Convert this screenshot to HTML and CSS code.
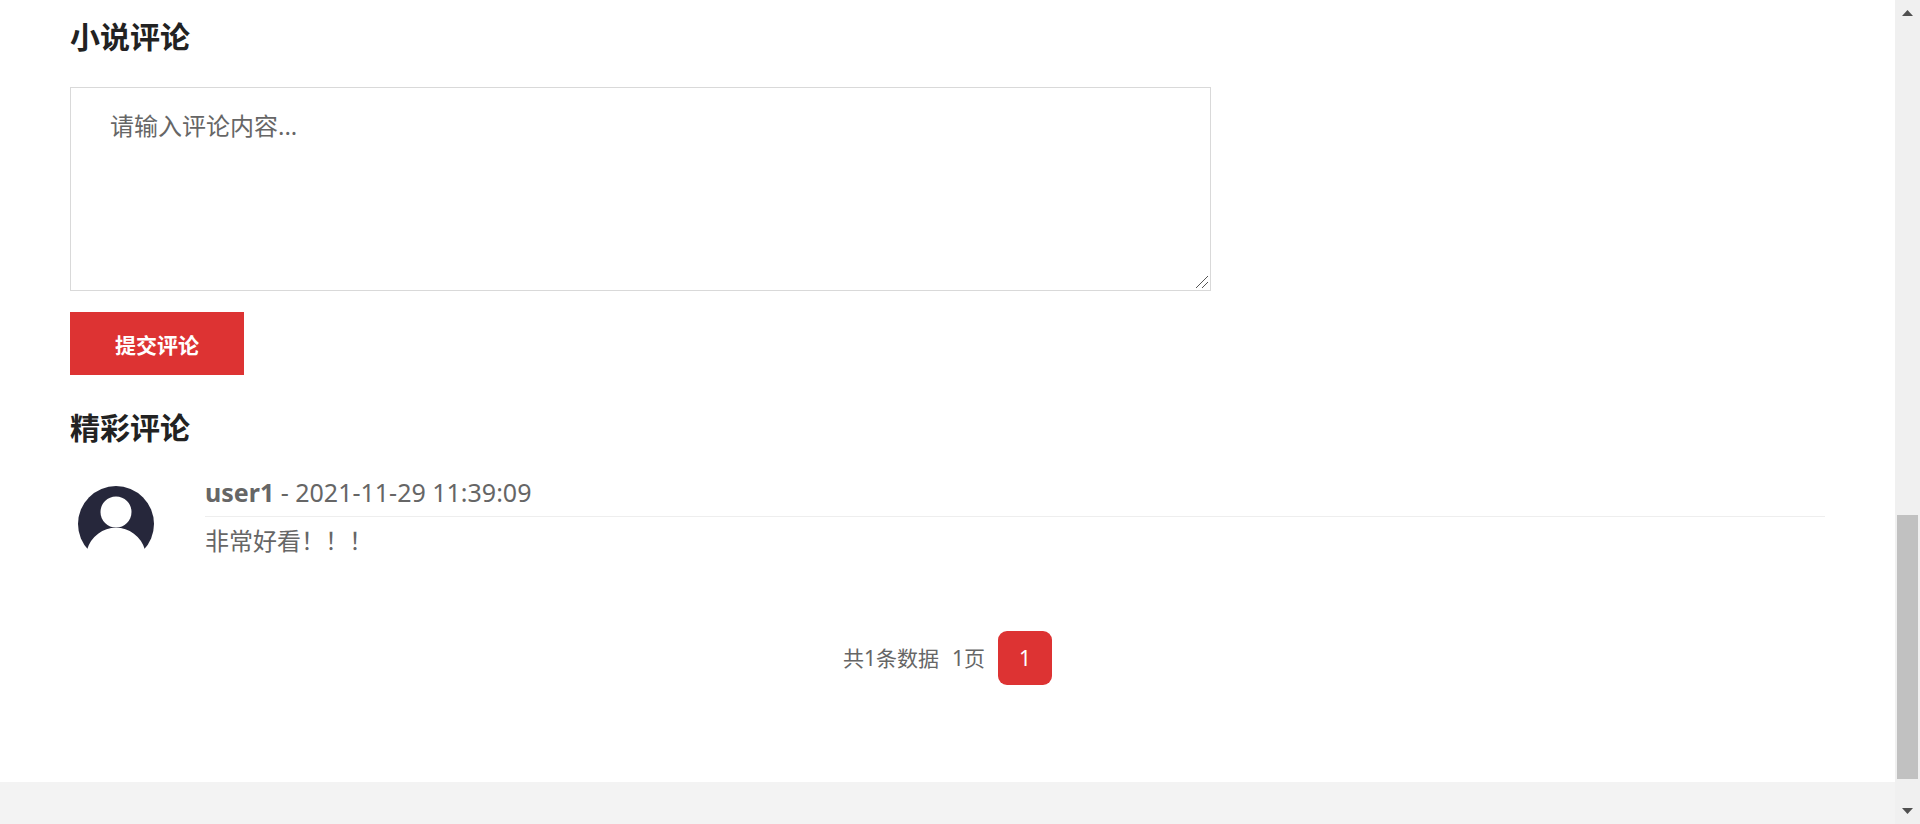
FILE: index.html
```html
<!DOCTYPE html>
<html lang="zh-CN">
<head>
<meta charset="UTF-8">
<meta name="viewport" content="width=device-width, initial-scale=1.0">
<title>小说评论</title>
<link rel="stylesheet" href="styles.css">
</head>
<body>

<div class="page">
    <main class="content">
        <form class="comment-form">
            <h2><label for="comment">小说评论</label></h2>
            <div class="input-box">
                <textarea id="comment" name="comment" placeholder="请输入评论内容..."></textarea>
                <!-- resize handle -->
                <svg class="grip" viewBox="0 0 12 12" aria-hidden="true"><path d="M0 12L12 0M6 12L12 6"/></svg>
            </div>
            <button type="submit" class="submit-btn">提交评论</button>
        </form>

        <section class="comments">
            <h2>精彩评论</h2>
            <article class="comment">
                <svg class="avatar" viewBox="0 0 76 76" aria-hidden="true">
                    <circle cx="38" cy="38" r="38" fill="#26273b"/>
                    <circle cx="38" cy="26" r="15.5" fill="#fff"/>
                    <path d="M9.300 63A30 30 0 0 1 66.700 63L76 70V76H0V70Z" fill="#fff"/>
                </svg>
                <div class="comment-body">
                    <div class="comment-head"><strong>user1</strong> - 2021-11-29 11:39:09</div>
                    <p>非常好看！！！</p>
                </div>
            </article>
        </section>

        <nav class="pager" aria-label="分页">
            <span>共1条数据</span>
            <span>1页</span>
            <a href="#" class="current">1</a>
        </nav>
    </main>
    <footer class="footer"></footer>
</div>

<div class="scrollbar" aria-hidden="true">
    <svg viewBox="0 0 11 6"><path d="M0 6L5.500 0L11 6Z"/></svg>
    <div class="track"><div class="thumb"></div></div>
    <svg viewBox="0 0 11 6"><path d="M0 0L5.500 6L11 0Z"/></svg>
</div>

</body>
</html>
```
FILE: styles.css
```css
* {
    box-sizing: border-box;
}

body {
    margin: 0;
    display: flex;
    min-height: 100vh;
    font-family: "Noto Sans", "Noto Sans CJK SC", sans-serif;
    font-size: 24px;
    line-height: 36px;
    color: #666;
    background-color: #fff;
}

.page {
    flex: 1;
    display: flex;
    flex-direction: column;
}

.content {
    padding: 15px 70px 97px;
}

h2 {
    margin: 0;
    font-size: 30px;
    line-height: 44px;
    color: #222;
}

/* comment form */
.comment-form {
    display: flex;
    flex-direction: column;
    align-items: flex-start;
    margin-bottom: 31px;
}

.input-box {
    position: relative;
    width: 65%;
    margin: 28px 0 21px;
}

textarea {
    display: block;
    width: 100%;
    height: 204px;
    padding: 20px 39px;
    border: 1px solid #d9d9d9;
    font: inherit;
    color: #666;
    resize: none;
}

textarea::placeholder {
    color: #666;
}

.grip {
    position: absolute;
    right: 3px;
    bottom: 3px;
    width: 12px;
    height: 12px;
    fill: none;
    stroke: #555;
}

.submit-btn {
    width: 174px;
    height: 63px;
    border: none;
    background-color: #dd3333;
    color: #fff;
    font-family: inherit;
    font-size: 21px;
    font-weight: bold;
    cursor: pointer;
}

/* comment list */
.comment {
    display: flex;
    gap: 51px;
    padding: 24px 0 0 8px;
}

.avatar {
    width: 76px;
    height: 76px;
    margin-top: 12px;
}

.comment-body {
    flex: 1;
}

.comment-head {
    height: 43px;
    border-bottom: 1px solid #eee;
    font-size: 25px;
}

.comment p {
    margin: 6px 0 0;
}

/* pagination */
.pager {
    display: flex;
    justify-content: center;
    align-items: center;
    gap: 13px;
    margin-top: 69px;
    font-size: 21px;
}

.pager a {
    width: 54px;
    line-height: 54px;
    border-radius: 9px;
    background-color: #dd3333;
    color: #fff;
    text-align: center;
    text-decoration: none;
}

.footer {
    flex: 1;
    min-height: 42px;
    background-color: #f3f3f3;
}

/* scrollbar */
.scrollbar {
    position: sticky;
    top: 0;
    display: flex;
    flex-direction: column;
    align-items: center;
    width: 25px;
    height: 100vh;
    padding: 10px 0;
    background-color: #f0f0f0;
}

.scrollbar svg {
    width: 11px;
    height: 6px;
    fill: #505050;
}

.track {
    flex: 1;
    display: flex;
    flex-direction: column;
    justify-content: flex-end;
    padding-bottom: 29px;
}

.thumb {
    width: 21px;
    height: 32vh;
    background-color: #c1c1c1;
}
```
